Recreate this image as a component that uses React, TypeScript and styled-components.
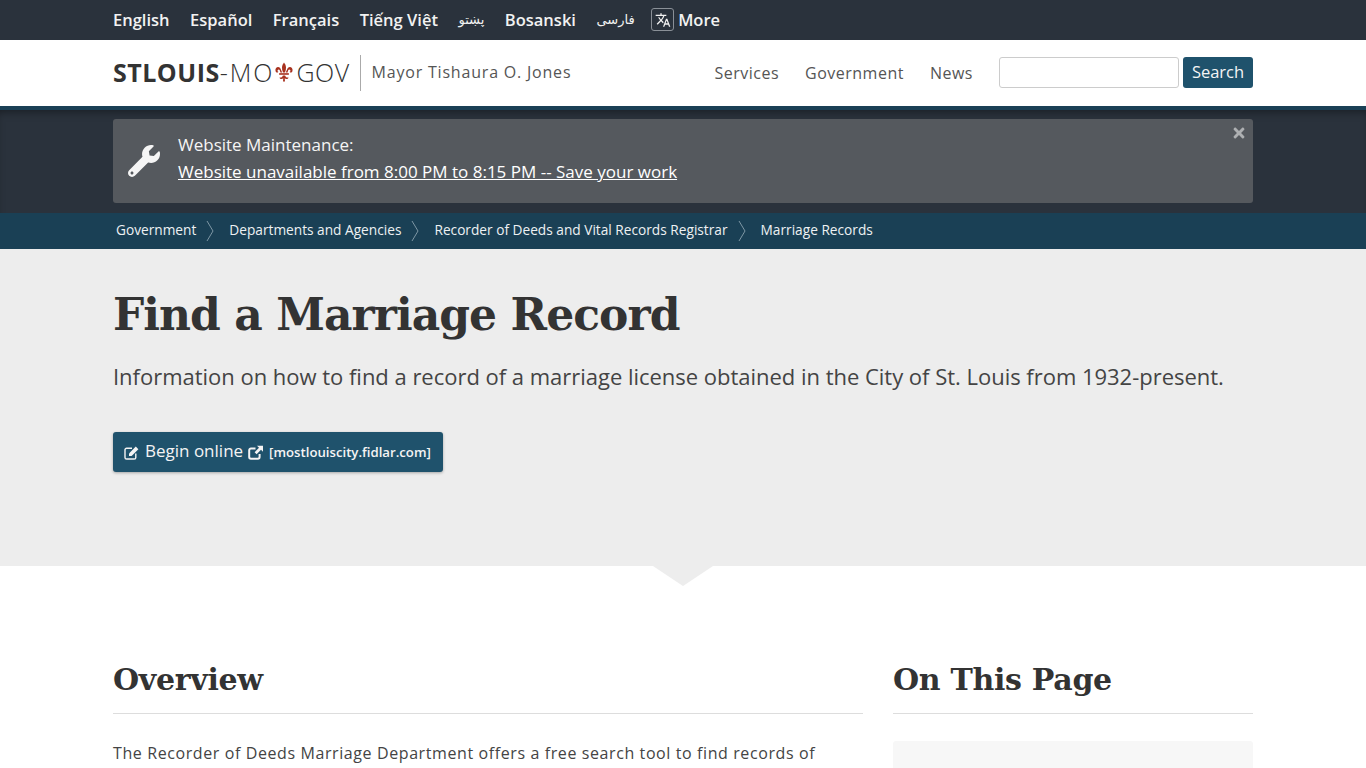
import React from "react";
import styled, { createGlobalStyle } from "styled-components";
import { FaWrench, FaTimes } from "react-icons/fa";
import { MdTranslate } from "react-icons/md";

const GlobalStyle = createGlobalStyle`
  html, body {
    margin: 0;
    padding: 0;
    background: #fff;
    color: #444;
    font-family: "Open Sans", "Noto Sans", sans-serif;
    overflow-x: hidden;
  }
  * { box-sizing: border-box; }
`;

const Container = styled.div`
  width: 1140px;
  margin: 0 auto;
`;

const LangBar = styled.div`
  height: 40px;
  background: #2a323c;
`;

const LangRow = styled(Container)`
  display: flex;
  align-items: center;
  height: 40px;
  padding-bottom: 1px;
  gap: 20.5px;
`;

const LangLink = styled.a<{ $rtl?: boolean }>`
  color: #f2f2f2;
  font-size: ${(p) => (p.$rtl ? "13px" : "16.5px")};
  font-weight: ${(p) => (p.$rtl ? 400 : 600)};
  font-family: ${(p) => (p.$rtl ? '"DejaVu Sans", sans-serif' : "inherit")};
`;

const MoreLink = styled.a`
  display: flex;
  align-items: center;
  gap: 4px;
  margin-left: -4px;
  color: #f2f2f2;
  font-size: 16.5px;
  font-weight: 600;
`;

const TranslateBox = styled.span`
  display: flex;
  align-items: center;
  justify-content: center;
  width: 23px;
  height: 23px;
  border: 1px solid #8a9097;
  border-radius: 3px;
  font-size: 16px;
`;

const Header = styled.header`
  height: 70px;
  background: #fff;
  border-bottom: 4px solid #1a4055;
`;

const HeaderRow = styled(Container)`
  display: flex;
  align-items: center;
  height: 66px;
`;

const Logo = styled.a`
  display: flex;
  align-items: center;
  margin-bottom: 3px;
  font-size: 25px;
  color: #333;
  letter-spacing: 0.5px;
  font-weight: 300;
`;

const LogoBold = styled.b`
  font-weight: 700;
`;

const LogoState = styled.span`
  letter-spacing: 2px;
`;

const Fleur = styled.svg`
  width: 18px;
  height: 20px;
  margin: 1px 3px 0 1px;
  fill: #a8321f;
`;

const Mayor = styled.a`
  margin-left: 10px;
  padding-left: 11px;
  border-left: 1px solid #aaa;
  height: 36px;
  line-height: 34px;
  font-size: 16px;
  letter-spacing: 0.8px;
  color: #555;
`;

const Nav = styled.nav`
  margin-left: auto;
  display: flex;
  align-items: center;
  gap: 26px;
`;

const NavLink = styled.a`
  font-size: 16px;
  letter-spacing: 0.5px;
  color: #555;
`;

const SearchForm = styled.div`
  display: flex;
  align-items: center;
  margin: 0 0 2px 26px;
  gap: 4px;
`;

const SearchInput = styled.input`
  width: 180px;
  height: 31px;
  border: 1px solid #ccc;
  border-radius: 3px;
  background: #fff;
`;

const SearchButton = styled.button`
  width: 70px;
  height: 31px;
  border: 0;
  border-radius: 3px;
  background: #1f526c;
  color: #f4f4f4;
  font-family: inherit;
  font-size: 16.5px;
  font-weight: 500;
  padding: 0 0 2px;
`;

const AlertBand = styled.div`
  height: 103px;
  padding-top: 9px;
  background: #2a323c;
  box-shadow: inset 0 6px 8px -4px rgba(0, 0, 0, 0.4);
`;

const AlertBox = styled(Container)`
  position: relative;
  display: flex;
  align-items: center;
  height: 84px;
  padding-left: 15px;
  background: #55595e;
  border-radius: 3px;
  color: #f5f5f5;
`;

const AlertIcon = styled(FaWrench)`
  font-size: 32px;
  color: #f5f5f5;
  margin-right: 18px;
`;

const AlertText = styled.div`
  padding-bottom: 6px;
  font-size: 17px;
  font-weight: 500;
  line-height: 27px;
`;

const AlertLink = styled.a`
  display: block;
  color: #fff;
  text-decoration: underline;
`;

const CloseIcon = styled(FaTimes)`
  position: absolute;
  top: 6px;
  right: 6px;
  font-size: 16px;
  color: #aeb0b2;
`;

const Crumbs = styled.div`
  height: 36px;
  background: #1a4055;
`;

const CrumbRow = styled(Container)`
  display: flex;
  align-items: center;
  height: 33px;
  padding-left: 3px;
`;

const Crumb = styled.a`
  font-size: 13.7px;
  font-weight: 500;
  color: #eef1f3;
`;

const CrumbSep = styled.svg`
  width: 8px;
  height: 20px;
  margin: 3px 15px 0 10px;
  fill: none;
  stroke: #7d96a4;
  stroke-width: 1;
`;

const Hero = styled.section`
  position: relative;
  height: 317px;
  background: #ededed;
  &::after {
    content: "";
    position: absolute;
    left: 50%;
    bottom: -20px;
    margin-left: -30px;
    border-style: solid;
    border-width: 20px 30px 0;
    border-color: #ededed transparent transparent;
  }
`;

const HeroTitle = styled.h1`
  margin: 0;
  padding-top: 30px;
  font-family: "DejaVu Serif", serif;
  font-size: 44px;
  letter-spacing: -0.95px;
  line-height: 72px;
  font-weight: 700;
  color: #333;
`;

const HeroLead = styled.p`
  margin: 10px 0 0;
  font-size: 22px;
  letter-spacing: -0.02px;
  line-height: 30px;
  color: #444;
  white-space: nowrap;
`;

const BeginButton = styled.a`
  display: inline-flex;
  align-items: center;
  height: 40px;
  margin-top: 41px;
  padding: 0 12px 0 11px;
  background: #1f526c;
  border-radius: 3px;
  box-shadow: 0 1px 3px rgba(0, 0, 0, 0.3);
  color: #f4f4f4;
  font-size: 17px;
`;

const BeginIcon = styled.svg`
  width: 16px;
  height: 15px;
  fill: #f4f4f4;
  stroke: none;
  flex: none;
`;

const IconFrame = styled.path<{ $weight: number }>`
  fill: none;
  stroke: #f4f4f4;
  stroke-width: ${(p) => p.$weight};
`;

const BeginLabel = styled.span`
  margin: -4px 5px 0 5px;
`;

const BeginHost = styled.small`
  margin-left: 5px;
  font-size: 13.2px;
  font-weight: 600;
`;

const Body = styled(Container)`
  display: grid;
  grid-template-columns: 750px 360px;
  column-gap: 30px;
  padding-top: 85px;
`;

const SectionTitle = styled.h2`
  margin: 0;
  padding: 6px 0 10px;
  font-family: "DejaVu Serif", serif;
  font-size: 30px;
  letter-spacing: -0.3px;
  line-height: 46px;
  font-weight: 700;
  color: #333;
  border-bottom: 1px solid #ddd;
`;

const Paragraph = styled.p`
  margin: 26px 0 0;
  font-size: 16px;
  line-height: 26px;
  letter-spacing: 0.6px;
  color: #444;
  white-space: nowrap;
`;

const Panel = styled.div`
  margin-top: 27px;
  height: 120px;
  background: #f7f7f7;
  border-radius: 3px;
`;

const crumbs = [
  "Government",
  "Departments and Agencies",
  "Recorder of Deeds and Vital Records Registrar",
  "Marriage Records",
];

export default function App() {
  return (
    <>
      <GlobalStyle />
      <LangBar>
        <LangRow>
          <LangLink>English</LangLink>
          <LangLink>Español</LangLink>
          <LangLink>Français</LangLink>
          <LangLink>Tiếng Việt</LangLink>
          <LangLink $rtl>پښتو</LangLink>
          <LangLink>Bosanski</LangLink>
          <LangLink $rtl>فارسی</LangLink>
          <MoreLink>
            <TranslateBox>
              <MdTranslate />
            </TranslateBox>
            More
          </MoreLink>
        </LangRow>
      </LangBar>
      <Header>
        <HeaderRow>
          <Logo>
            <LogoBold>STLOUIS</LogoBold>
            <LogoState>-MO</LogoState>
            <Fleur viewBox="0 0 20 22">
              <path d="M10 0.5C7.2 3.6 7.2 7.4 8.9 11.6H11.1C12.8 7.4 12.8 3.6 10 0.5Z" />
              <path d="M8 11.6C6.6 8.6 6 5.4 3.6 5.4C1.4 5.4 0 7.6 0.6 9.8C1.1 11.6 3 12.2 3.8 10.6C2.6 10.6 2.4 8.8 3.6 8.4C5.2 8 5.8 10.2 6 11.6Z" />
              <path d="M12 11.6C13.4 8.6 14 5.4 16.4 5.4C18.6 5.4 20 7.6 19.4 9.8C18.9 11.6 17 12.2 16.2 10.6C17.4 10.6 17.6 8.8 16.4 8.4C14.8 8 14.2 10.2 14 11.6Z" />
              <rect x="4.6" y="12.3" width="10.8" height="1.8" />
              <path d="M8.8 14.8C8.4 16.4 7 17.4 5 17C5.4 19 7.8 19.6 9.2 18L8.9 21.5H11.1L10.8 18C12.2 19.6 14.6 19 15 17C13 17.4 11.6 16.4 11.2 14.8Z" />
            </Fleur>
            GOV
          </Logo>
          <Mayor>Mayor Tishaura O. Jones</Mayor>
          <Nav>
            <NavLink>Services</NavLink>
            <NavLink>Government</NavLink>
            <NavLink>News</NavLink>
          </Nav>
          <SearchForm>
            <SearchInput />
            <SearchButton>Search</SearchButton>
          </SearchForm>
        </HeaderRow>
      </Header>
      <AlertBand>
        <AlertBox>
          <AlertIcon />
          <AlertText>
            Website Maintenance:
            <AlertLink>Website unavailable from 8:00 PM to 8:15 PM -- Save your work</AlertLink>
          </AlertText>
          <CloseIcon />
        </AlertBox>
      </AlertBand>
      <Crumbs>
        <CrumbRow>
          {crumbs.map((c, i) => (
            <React.Fragment key={c}>
              <Crumb>{c}</Crumb>
              {i < crumbs.length - 1 && (
                <CrumbSep viewBox="0 0 8 20">
                  <path d="M1 0 L7 10 L1 20" />
                </CrumbSep>
              )}
            </React.Fragment>
          ))}
        </CrumbRow>
      </Crumbs>
      <Hero>
        <Container>
          <HeroTitle>Find a Marriage Record</HeroTitle>
          <HeroLead>
            Information on how to find a record of a marriage license obtained in the City of St. Louis from 1932-present.
          </HeroLead>
          <BeginButton>
            <BeginIcon viewBox="0 0 16 15">
              <IconFrame $weight={1.4} d="M8 3.2H2.6A1.6 1.6 0 0 0 1 4.8V12.4A1.6 1.6 0 0 0 2.6 14H10.2A1.6 1.6 0 0 0 11.8 12.4V8.4" />
              <path d="M5 8.4L11.8 1.6L14.4 4.2L7.6 11H5Z" />
            </BeginIcon>
            <BeginLabel>Begin online</BeginLabel>
            <BeginIcon viewBox="0 0 16 15">
              <IconFrame $weight={2} d="M7.5 3.4H3A1.8 1.8 0 0 0 1.2 5.2V12A1.8 1.8 0 0 0 3 13.8H9.8A1.8 1.8 0 0 0 11.6 12V9" />
              <path d="M9 0.8H15V6.8L13 4.8L8.6 9.2L6.6 7.2L11 2.8Z" />
            </BeginIcon>
            <BeginHost>[mostlouiscity.fidlar.com]</BeginHost>
          </BeginButton>
        </Container>
      </Hero>
      <Body>
        <div>
          <SectionTitle>Overview</SectionTitle>
          <Paragraph>
            The Recorder of Deeds Marriage Department offers a free search tool to find records of
          </Paragraph>
        </div>
        <div>
          <SectionTitle>On This Page</SectionTitle>
          <Panel />
        </div>
      </Body>
    </>
  );
}
